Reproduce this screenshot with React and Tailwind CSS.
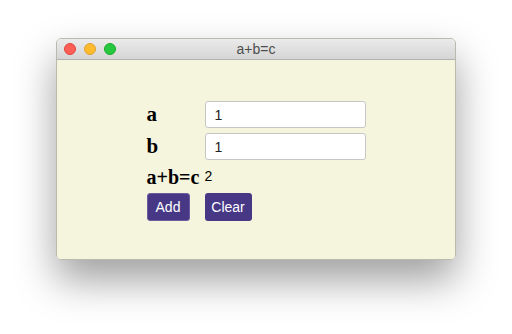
export default function App() {
  const serif = { fontFamily: '"Liberation Serif", "Times New Roman", serif' };
  return (
    <div className="w-[512px] h-[334px] bg-white relative overflow-hidden" style={{ fontFamily: '"Liberation Sans", Arial, sans-serif' }}>
      <div className="absolute left-[56px] top-[38px] w-[400px] h-[222px] rounded-[5px] overflow-hidden border border-[#b9b9b0] shadow-[0_20px_40px_rgba(0,0,0,0.38)] flex flex-col">
        <div className="h-[21px] shrink-0 bg-gradient-to-b from-[#ebebeb] to-[#d5d5d5] border-b border-[#b2b2b2] flex items-center relative">
          <div className="flex gap-[8px] pl-[7px]">
            <span className="w-[12px] h-[12px] rounded-full bg-[#fd5f57] border border-[#e0443e]" />
            <span className="w-[12px] h-[12px] rounded-full bg-[#febb2e] border border-[#dea236]" />
            <span className="w-[12px] h-[12px] rounded-full bg-[#27c840] border border-[#1aab29]" />
          </div>
          <div className="absolute inset-0 flex items-center justify-center text-[14px] text-[#4d4d4d]">a+b=c</div>
        </div>
        <div className="flex-1 bg-[#f5f4dc] flex justify-center pt-[41px]">
          <div className="grid grid-cols-[58px_161px] grid-rows-[27px_27px_23px_28px] items-center gap-y-[5px]">
            <div className="font-bold text-[21px] leading-none text-black" style={serif}>a</div>
            <input readOnly value="1" className="h-[27px] w-[161px] rounded-[3px] border border-[#c6c6c6] bg-white px-[9px] text-[14px] text-[#222] outline-none" />
            <div className="font-bold text-[21px] leading-none text-black" style={serif}>b</div>
            <input readOnly value="1" className="h-[27px] w-[161px] rounded-[3px] border border-[#c6c6c6] bg-white px-[9px] text-[14px] text-[#222] outline-none" />
            <div className="font-bold text-[20px] leading-none text-black whitespace-nowrap" style={serif}>a+b=c</div>
            <div className="text-[14px] text-black">2</div>
            <div>
              <button className="h-[28px] w-[43px] rounded-[3px] bg-[#473886] text-white text-[14px] border border-[#6a5e9e]">Add</button>
            </div>
            <div>
              <button className="h-[28px] w-[47px] rounded-[3px] bg-[#473886] text-white text-[14px]">Clear</button>
            </div>
          </div>
        </div>
      </div>
    </div>
  );
}
